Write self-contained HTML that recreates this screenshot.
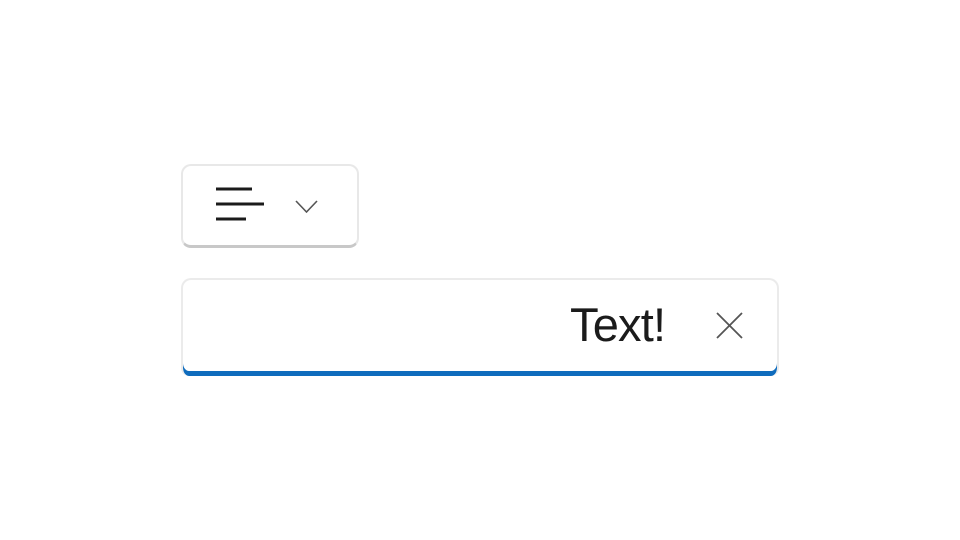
<!DOCTYPE html>
<html><head><style>
html,body{margin:0;padding:0;background:#fff;width:960px;height:540px;overflow:hidden;font-family:"Liberation Sans",sans-serif}
.btn{position:absolute;left:181px;top:164px;width:174px;height:79px;border:2px solid #e8e8e8;border-bottom:3px solid #c8c8c8;border-radius:10px;background:#fff}
.inp{position:absolute;left:181px;top:278px;width:594px;height:96px;border:2px solid #ebebeb;border-bottom:none;border-radius:10px 10px 8px 8px;background:#fff;box-shadow:inset 0 -5px 0 #0f6cbd;overflow:hidden}
.txt{position:absolute;left:570px;top:299px;font-size:47px;color:#1b1b1b;letter-spacing:-0.8px;line-height:52px}
</style></head><body>
<div class="btn"></div>
<svg width="960" height="540" style="position:absolute;left:0;top:0">
<g stroke="#1b1b1b" stroke-width="3">
<line x1="216" y1="189" x2="252" y2="189"/>
<line x1="216" y1="204" x2="264" y2="204"/>
<line x1="216" y1="219" x2="246" y2="219"/>
</g>
<polyline points="296,201 306.5,212 317,201" fill="none" stroke="#555" stroke-width="1.6"/>
</svg>
<div class="inp"></div>
<div class="txt">Text!</div>
<svg width="960" height="540" style="position:absolute;left:0;top:0">
<g stroke="#555" stroke-width="1.8">
<line x1="717" y1="313" x2="742" y2="338"/>
<line x1="742" y1="313" x2="717" y2="338"/>
</g>
</svg>
</body></html>
